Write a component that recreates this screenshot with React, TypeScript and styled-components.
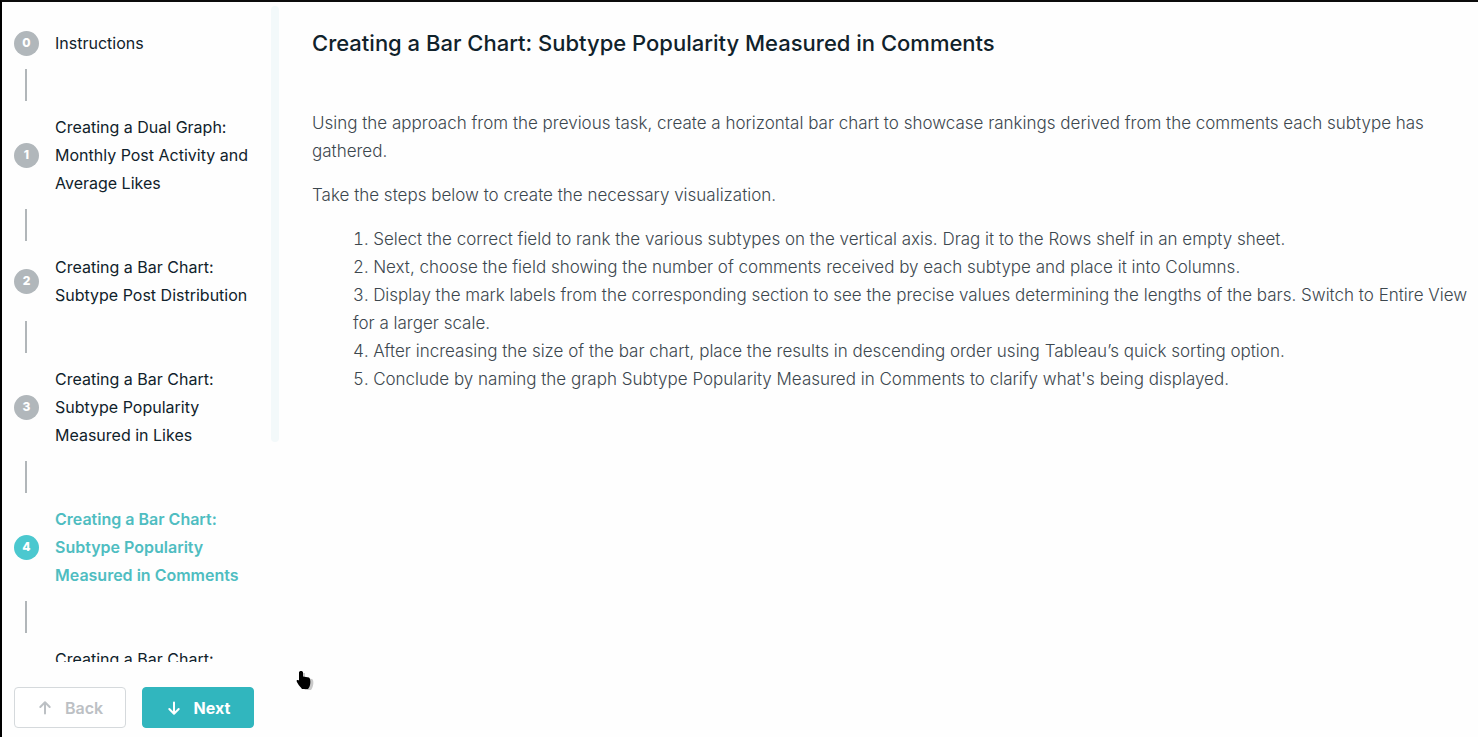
import React, { useState } from "react";
import styled, { createGlobalStyle } from "styled-components";

const GlobalStyle = createGlobalStyle`
  *, *::before, *::after { box-sizing: border-box; }
  body {
    margin: 0;
    background: #fefefe;
    color: #10222b;
    font-family: Inter, "Liberation Sans", sans-serif;
  }
`;

const Page = styled.div`
  display: grid;
  grid-template-columns: 268px 10px minmax(0, 1fr);
  height: 100vh;
  border-top: 2px solid #0c0c0c;
  border-left: 2px solid #000;
`;

const Sidebar = styled.aside`
  display: flex;
  flex-direction: column;
  min-height: 0;
  padding: 0 0 9px 12px;
`;

const StepList = styled.ol`
  flex: 1;
  min-height: 0;
  margin: 0;
  padding: 27px 0 0;
  overflow-y: auto;
  scrollbar-width: none;
  list-style: none;
`;

const Step = styled.li`
  &:not(:first-child)::before {
    content: "";
    display: block;
    width: 2px;
    height: 32px;
    margin: 12px 11px;
    background: #b1b6b9;
  }
`;

const StepLink = styled.a<{ $active: boolean; $rows: number }>`
  display: grid;
  grid-template-columns: 25px 204px;
  align-items: center;
  gap: 16px;
  min-height: ${(p) => p.$rows * 28}px;
  color: ${(p) => (p.$active ? "#4fbdc1" : "#10222b")};
  font-size: 16px;
  font-weight: ${(p) => (p.$active ? 600 : 400)};
  line-height: 28px;
  text-decoration: none;
`;

const StepNumber = styled.span<{ $active: boolean }>`
  display: flex;
  align-items: center;
  justify-content: center;
  height: 25px;
  border-radius: 50%;
  background: ${(p) => (p.$active ? "#4bc8cf" : "#b1b7bb")};
  color: #fff;
  font-size: 12px;
  font-weight: 800;
  line-height: 16px;
`;

const StepTitle = styled.span`
  align-self: start;
`;

const Actions = styled.div`
  display: flex;
  gap: 16px;
  padding-top: 25px;
`;

const ActionButton = styled.button<{ $primary?: boolean }>`
  display: flex;
  align-items: center;
  justify-content: center;
  gap: 12px;
  width: 112px;
  height: 41px;
  padding: 0;
  border: 1px solid ${(p) => (p.$primary ? "#31b6be" : "#d5d9dc")};
  border-radius: 4px;
  background: ${(p) => (p.$primary ? "#31b6be" : "#fff")};
  color: ${(p) => (p.$primary ? "#fff" : "#bcc0c4")};
  font-family: inherit;
  font-size: 16px;
  font-weight: ${(p) => (p.$primary ? 700 : 600)};
`;

const ScrollTrack = styled.div`
  padding: 4px 1px;
`;

const ScrollThumb = styled.div`
  height: 60%;
  border-radius: 4px;
  background: #f3f9fa;
`;

const Content = styled.main`
  padding: 26px 8px 26px 32px;
  color: #3c474e;
  font-size: 17px;
  font-weight: 300;
  line-height: 28px;
`;

const Title = styled.h1`
  margin: 0 0 50px;
  color: #10222b;
  font-size: 22px;
  font-weight: 500;
  line-height: 31px;
`;

const Paragraph = styled.p`
  margin: 0 0 16px;
`;

const Instructions = styled.ol`
  margin: 0;
  padding: 0 0 0 41px;
  list-style-position: inside;
`;

const Pointer = styled.svg`
  position: absolute;
  left: 296px;
  top: 670px;
  width: 18px;
  height: 22px;
  pointer-events: none;
`;

const steps = [
  { title: "Instructions", rows: 1 },
  { title: "Creating a Dual Graph: Monthly Post Activity and Average Likes", rows: 3 },
  { title: "Creating a Bar Chart: Subtype Post Distribution", rows: 2 },
  { title: "Creating a Bar Chart: Subtype Popularity Measured in Likes", rows: 3 },
  { title: "Creating a Bar Chart: Subtype Popularity Measured in Comments", rows: 3 },
  { title: "Creating a Bar Chart:", rows: 3 },
];

const instructions = [
  "Select the correct field to rank the various subtypes on the vertical axis. Drag it to the Rows shelf in an empty sheet.",
  "Next, choose the field showing the number of comments received by each subtype and place it into Columns.",
  "Display the mark labels from the corresponding section to see the precise values determining the lengths of the bars. Switch to Entire View for a larger scale.",
  "After increasing the size of the bar chart, place the results in descending order using Tableau’s quick sorting option.",
  "Conclude by naming the graph Subtype Popularity Measured in Comments to clarify what's being displayed.",
];

const Arrow = ({ down = false }: { down?: boolean }) => (
  <svg width="16" height="16" viewBox="0 0 16 16" fill="none" stroke="currentColor" strokeWidth="2" strokeLinecap="round" strokeLinejoin="round" aria-hidden="true">
    <path d={down ? "M8 2.5v11M3.3 9l4.7 4.7L12.7 9" : "M8 13.5v-11M3.3 7L8 2.3 12.7 7"} />
  </svg>
);

export default function App() {
  const [active, setActive] = useState(4);
  return (
    <>
      <GlobalStyle />
      <Page>
        <Sidebar>
          <StepList>
            {steps.map(({ title, rows }, i) => (
              <Step key={i}>
                <StepLink href={`#step-${i}`} $rows={rows} $active={i === active} onClick={() => setActive(i)}>
                  <StepNumber $active={i === active}>{i}</StepNumber>
                  <StepTitle>{title}</StepTitle>
                </StepLink>
              </Step>
            ))}
          </StepList>
          <Actions>
            <ActionButton type="button"><Arrow />Back</ActionButton>
            <ActionButton type="button" $primary><Arrow down />Next</ActionButton>
          </Actions>
        </Sidebar>
        <ScrollTrack><ScrollThumb /></ScrollTrack>
        <Content>
          <Title>Creating a Bar Chart: Subtype Popularity Measured in Comments</Title>
          <Paragraph>Using the approach from the previous task, create a horizontal bar chart to showcase rankings derived from the comments each subtype has gathered.</Paragraph>
          <Paragraph>Take the steps below to create the necessary visualization.</Paragraph>
          <Instructions>
            {instructions.map((text) => <li key={text}>{text}</li>)}
          </Instructions>
        </Content>
      </Page>
      <Pointer viewBox="0 0 18 22" aria-hidden="true">
        <path d="M6 3v9l-2 1 5 7h6c3-4 3-10 1-11L9 8V3z" fill="#c9c9c9" />
        <path d="M3 2.500v8l-1-.5c-2-.5-1.500 1-.5 3 1.500 3 3.500 4.500 4.500 6h6c3-3 3-10 1-11.500L7 6.500v-4c0-2-4-2-4 0z" fill="#000" />
      </Pointer>
    </>
  );
}
